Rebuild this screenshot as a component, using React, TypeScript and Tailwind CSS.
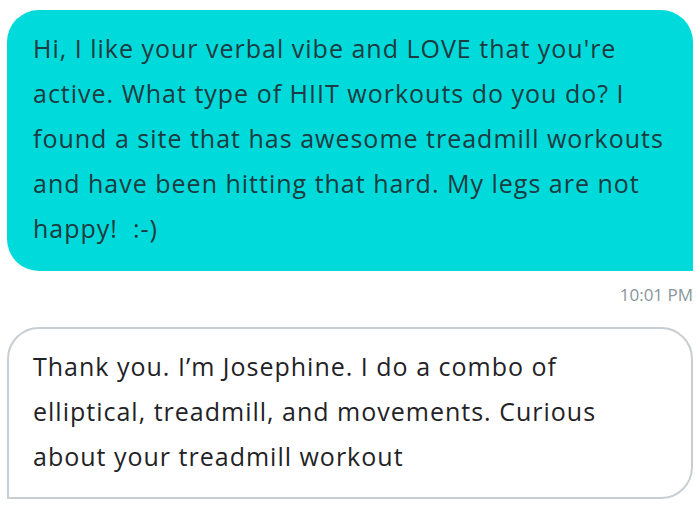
export default function App() {
  const font = { fontFamily: '"Open Sans", "Noto Sans", sans-serif' };
  return (
    <div className="w-[700px] h-[505px] bg-white px-[7px] pt-[10px]" style={font}>
      <div className="bg-[#00dada] rounded-t-[32px] rounded-bl-[32px] rounded-br-none pl-[26px] pr-4 pt-[16px] pb-[20px] text-[25px] tracking-[1px] leading-[45px] text-[#1d3b40] whitespace-nowrap">
        <div>Hi, I like your verbal vibe and LOVE that you're</div>
        <div>active. What type of HIIT workouts do you do? I</div>
        <div>found a site that has awesome treadmill workouts</div>
        <div>and have been hitting that hard. My legs are not</div>
        <div>happy!&nbsp; :-)</div>
      </div>
      <div className="flex justify-end pt-[13px] pb-[22px] text-[17px] leading-[21px] text-[#8c959c]">10:01 PM</div>
      <div className="border-2 border-[#c9ced3] rounded-t-[32px] rounded-br-[32px] rounded-bl-none pl-[24px] pr-4 pt-[15px] pb-[18px] text-[25px] tracking-[1px] leading-[45px] text-[#1f2326] whitespace-nowrap">
        <div>Thank you. I’m Josephine. I do a combo of</div>
        <div>elliptical, treadmill, and movements. Curious</div>
        <div>about your treadmill workout</div>
      </div>
    </div>
  );
}
